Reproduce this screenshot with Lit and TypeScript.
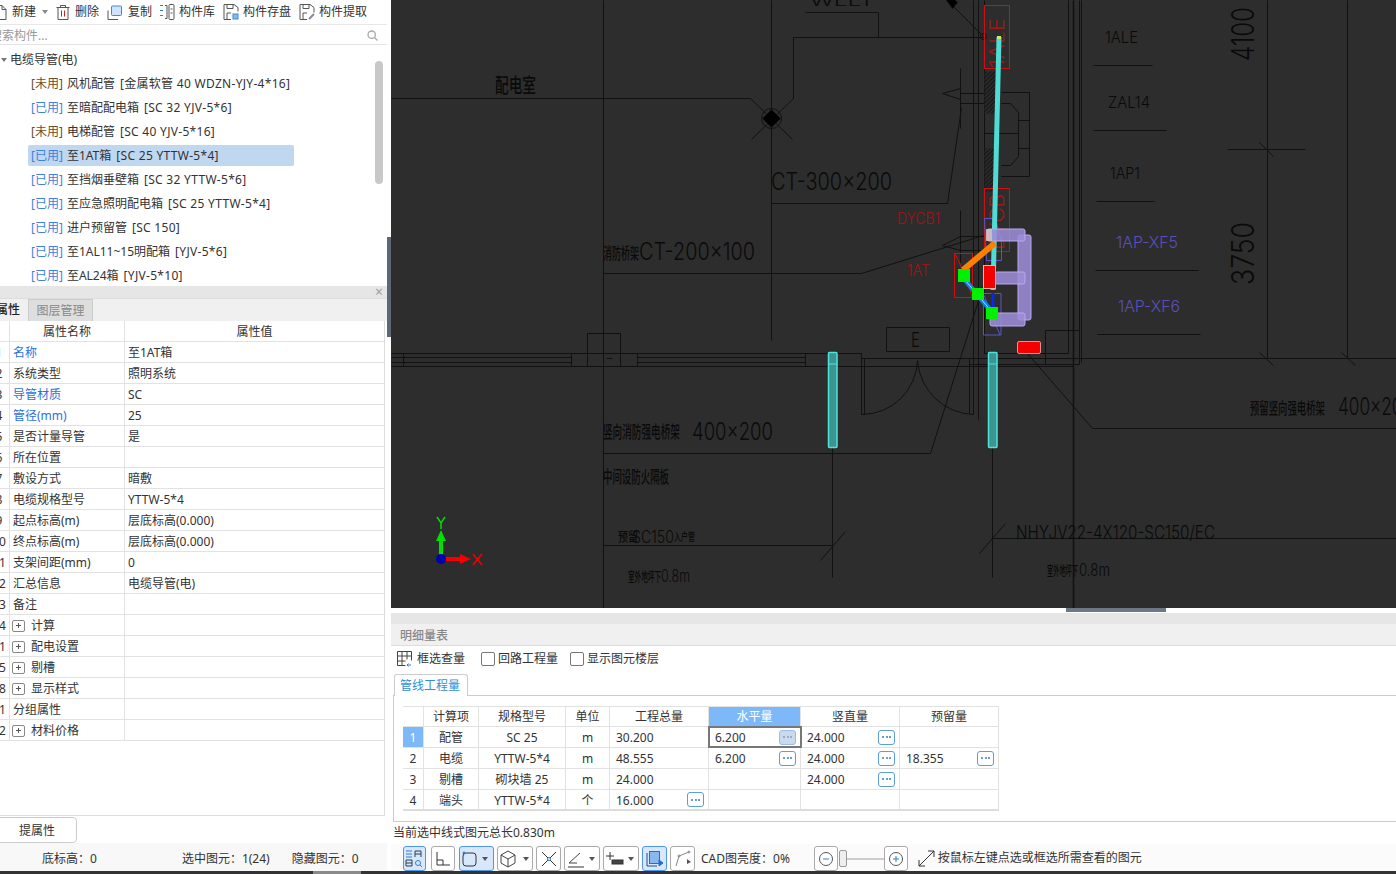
import { LitElement, html, css, svg } from 'lit';
import { customElement } from 'lit/decorators.js';

const UI_FONT = css`"Noto Sans", "Noto Sans CJK SC", sans-serif`;

// cad line work, page coordinates: x1 y1 x2 y2
const LINES: number[][] = [
  [391, 98, 750, 98], [750, 98, 792, 139], [793, 98, 751, 139], [793, 98, 793, 37],
  [793, 37, 983, 37], [878, 37, 878, 12], [805, 12, 878, 12],
  [603, 0, 603, 608], [771, 0, 771, 340], [771, 203, 947, 203], [947, 203, 961, 107],
  [960, 68, 960, 128], [960, 88, 942, 93], [942, 93, 960, 99], [960, 93, 984, 93], [960, 103, 984, 103],
  [960, 236, 942, 245], [942, 245, 960, 250], [960, 236, 984, 236], [960, 250, 984, 250], [960, 210, 960, 262],
  [603, 273, 861, 273], [861, 273, 983, 235],
  [391, 353, 861, 353], [391, 357, 571, 357], [391, 362, 571, 362], [391, 366, 861, 366],
  [637, 357, 805, 357], [637, 362, 805, 362],
  [403, 353, 403, 366], [571, 353, 571, 366], [637, 353, 637, 366], [805, 353, 805, 366],
  [587, 333, 620, 333], [587, 333, 587, 366], [620, 333, 620, 366], [606, 358, 612, 358],
  [861, 353, 861, 414], [864, 358, 864, 414], [861, 414, 864, 414],
  [603, 453, 930, 453], [930, 453, 990, 262],
  [973, 0, 973, 414], [969, 358, 969, 414], [978, 0, 978, 419], [984, 0, 984, 353],
  [984, 353, 1068, 353], [1068, 0, 1068, 353], [1079, 0, 1079, 364], [1081, 0, 1081, 362],
  [1045, 330, 1079, 330], [1045, 330, 1045, 364], [969, 364, 1079, 364],
  [861, 358, 1396, 358], [861, 366, 1073, 366],
  [1097, 334, 1200, 334], [1267, 0, 1267, 358], [1347, 0, 1347, 358],
  [1259, 352, 1273, 365], [1341, 352, 1355, 365], [1227, 149, 1305, 149], [1259, 142, 1273, 156],
  [1027, 353, 1092, 428], [1092, 428, 1396, 428],
  [992, 448, 992, 577], [979, 553, 1005, 523], [992, 538, 1396, 538],
  [832, 448, 832, 577], [603, 545, 832, 545], [820, 560, 845, 531],
  [1093, 65, 1152, 65], [1093, 130, 1166, 130], [1096, 201, 1154, 201], [1095, 270, 1198, 270],
  [1001, 92, 1029, 92], [1029, 92, 1029, 176], [1029, 176, 1001, 176],
  [1001, 103, 1010, 103], [1010, 103, 1018, 112], [1018, 112, 1018, 156], [1018, 156, 1010, 165], [1010, 165, 1001, 165],
  [1018, 120, 1029, 120], [1018, 148, 1029, 148], [984, 133, 1018, 133],
  [886, 327, 949, 327], [949, 327, 949, 351], [949, 351, 886, 351], [886, 351, 886, 327],
];

// x, baseline, width, size, text, colour
const LABELS: [number, number, number, number, string, string][] = [
  [495, 93, 41, 20, '配电室', '#0a0a0a'],
  [810, 6, 60, 14, 'WLL1', '#0a0a0a'],
  [771, 190, 121, 24, 'CT-300×200', '#0a0a0a'],
  [603, 259, 36, 16, '消防桥架', '#0a0a0a'],
  [639, 260, 116, 24, 'CT-200×100', '#0a0a0a'],
  [603, 438, 77, 17, '竖向消防强电桥架', '#0a0a0a'],
  [692, 440, 81, 24, '400×200', '#0a0a0a'],
  [603, 483, 66, 17, '中间设防火隔板', '#0a0a0a'],
  [618, 541, 20, 13, '预留', '#0a0a0a'],
  [632, 543, 42, 17, 'SC150', '#0a0a0a'],
  [674, 541, 21, 11, '入户管', '#0a0a0a'],
  [628, 581, 33, 13, '室外地坪下', '#0a0a0a'],
  [661, 582, 29, 17, '0.8m', '#0a0a0a'],
  [1047, 575, 31, 13, '室外地坪下', '#0a0a0a'],
  [1079, 576, 31, 17, '0.8m', '#0a0a0a'],
  [1016, 539, 199, 19, 'NHYJV22-4X120-SC150/EC', '#0a0a0a'],
  [1250, 414, 75, 16, '预留竖向强电桥架', '#0a0a0a'],
  [1338, 415, 75, 24, '400×200', '#0a0a0a'],
  [1105, 43, 33, 16, '1ALE', '#0a0a0a'],
  [1108, 108, 42, 16, 'ZAL14', '#0a0a0a'],
  [1110, 179, 30, 16, '1AP1', '#0a0a0a'],
  [1116, 248, 62, 16, '1AP-XF5', '#5a50b8'],
  [1118, 312, 62, 16, '1AP-XF6', '#5a50b8'],
  [897, 224, 43, 16, 'DYCB1', '#a01414'],
  [907, 276, 23, 16, '1AT', '#a01414'],
  [911, 347, 9, 20, 'E', '#0a0a0a'],
];

const PURPLE = [
  [1018, 235, 13, 85], [987, 229, 38, 12], [995, 272, 30, 12], [990, 313, 35, 13],
];

const hasCjk = (s: string) => /[\u4e00-\u9fff]/.test(s);

@customElement('cad-canvas')
export class CadCanvas extends LitElement {
  static styles = css`
    :host { display: block; height: 608px; background: #2d2d2d; overflow: hidden; }
    svg { display: block; }
    text { font-family: Inter, "Liberation Sans", sans-serif; font-weight: 300; }
    text.cn { font-family: "Noto Sans CJK SC", sans-serif; font-weight: 500; }
  `;

  render() {
    return html`<svg width="1005" height="608" viewBox="391 0 1005 608">
      <defs>
        <pattern id="hatch" width="3" height="3" patternUnits="userSpaceOnUse" patternTransform="rotate(45)">
          <rect width="3" height="3" fill="#2a2a2a"></rect>
          <line x1="0" y1="0" x2="0" y2="3" stroke="#0c0c0c" stroke-width="1.500"></line>
        </pattern>
      </defs>
      <g stroke="#111" stroke-width="1" fill="none" transform="translate(.5 .5)">
        ${LINES.map(l => svg`<line x1=${l[0]} y1=${l[1]} x2=${l[2]} y2=${l[3]}></line>`)}
        <line x1="1073" y1="0" x2="1073" y2="608" stroke-width="1.500"></line>
        <circle cx="771" cy="118" r="10"></circle>
        <path d="M771 109l9 9-9 9-9-9z" fill="#000"></path>
        <path d="M861 414A56 56 0 0 0 917 360M917 360A58 58 0 0 0 973 414"></path>
        <circle cx="983" cy="36" r="3"></circle>
        <path d="M983 36L950 3"></path>
        <path d="M944 -3l6-2 7 7-5 6z" fill="#000"></path>
        <rect x="984" y="71" width="11" height="42" fill="url(#hatch)" stroke="none"></rect>
        <rect x="984" y="148" width="10" height="43" fill="url(#hatch)" stroke="none"></rect>
      </g>
      ${LABELS.map(l => svg`<text class=${hasCjk(l[4]) ? 'cn' : ''} x=${l[0]} y=${l[1]} font-size=${l[3]} fill=${l[5]} textLength=${l[2]} lengthAdjust="spacingAndGlyphs">${l[4]}</text>`)}
      <text transform="translate(1254 61) rotate(-90)" font-size="31" fill="#0a0a0a" textLength="54" lengthAdjust="spacingAndGlyphs">4100</text>
      <text transform="translate(1254 285) rotate(-90)" font-size="31" fill="#0a0a0a" textLength="63" lengthAdjust="spacingAndGlyphs">3750</text>

      <g fill="none" stroke="#d01010" stroke-width="1" transform="translate(.5 .5)">
        <rect x="984" y="5" width="25" height="63"></rect>
        <rect x="984" y="188" width="25" height="63"></rect>
        <rect x="954" y="253" width="18" height="44"></rect>
        <path d="M955 254l10 22M965 276l7 22"></path>
      </g>
      <text transform="translate(1004 68) rotate(-90)" font-size="20" fill="#a01818" textLength="50" lengthAdjust="spacingAndGlyphs">1ALE</text>
      <text transform="translate(1004 250) rotate(-90)" font-size="20" fill="#a01818" textLength="56" lengthAdjust="spacingAndGlyphs">DYCB</text>

      <g fill="none" stroke="#5a54c8" stroke-width="1">
        <path d="M984.500 218.500h11l6 24v18h-15z"></path>
        <path d="M983.500 293.500h17.500v41.500h-17.500z"></path>
        <path d="M983 293l17 42"></path>
      </g>
      <line x1="999" y1="37" x2="993" y2="290" stroke="#4edcd4" stroke-width="5"></line>
      <rect x="997" y="36" width="4" height="3" fill="#c8e868"></rect>
      <line x1="993" y1="293" x2="993" y2="307" stroke="#0a28e8" stroke-width="3"></line>
      ${PURPLE.map(p => svg`<rect x=${p[0]} y=${p[1]} width=${p[2]} height=${p[3]} rx="2" fill="#9d8dd6" fill-opacity=".88" stroke="#b8a8f4"></rect>`)}
      <rect x="986" y="229" width="6" height="12" fill="#d8c8c0" fill-opacity=".8"></rect>
      <line x1="963" y1="270" x2="995" y2="243" stroke="#ff7f00" stroke-width="6"></line>
      <line x1="965" y1="280" x2="992" y2="312" stroke="#0a80f0" stroke-width="5"></line>
      <line x1="965" y1="280" x2="992" y2="312" stroke="#a8dcff" stroke-width="1"></line>
      <rect x="958" y="269" width="12" height="13" fill="#00f000"></rect>
      <rect x="972" y="288" width="12" height="12" fill="#00f000"></rect>
      <rect x="986" y="307" width="12" height="12" fill="#00f000"></rect>
      <rect x="983.500" y="265.500" width="12" height="23" fill="#f40000" stroke="#e8b0a8"></rect>
      <rect x="1017.500" y="341.500" width="23" height="12" rx="1.500" fill="#f40000" stroke="#e89088"></rect>

      <g fill="#3fa8a4" fill-opacity=".85" stroke="#4ee4dc" stroke-width="1.500">
        <rect x="828.500" y="352.500" width="8.500" height="95" rx="1"></rect>
        <rect x="988.500" y="352.500" width="8.500" height="95" rx="1"></rect>
      </g>
      <path d="M828 364h9M988 364h9" stroke="#4ee4dc"></path>

      <line x1="441" y1="559" x2="441" y2="540" stroke="#00e000" stroke-width="4"></line>
      <path d="M441 530l5 11h-10z" fill="#00e000"></path>
      <path d="M437 517l4 6 4-6M441 523v6" stroke="#00e000" fill="none" stroke-width="1.500"></path>
      <line x1="441" y1="559" x2="460" y2="559" stroke="#f40000" stroke-width="4"></line>
      <path d="M471 559l-11 5v-10z" fill="#f40000"></path>
      <path d="M473 554l9 11M482 554l-9 11" stroke="#f40000" fill="none" stroke-width="1.500"></path>
      <circle cx="441" cy="559" r="5" fill="#0000b0"></circle>
    </svg>`;
  }
}

type TreeRow = { used: boolean; name: string; spec: string; selected?: boolean };

const TREE: TreeRow[] = [
  { used: false, name: '风机配管', spec: '[金属软管 40 WDZN-YJY-4*16]' },
  { used: true, name: '至暗配配电箱', spec: '[SC 32 YJV-5*6]' },
  { used: false, name: '电梯配管', spec: '[SC 40 YJV-5*16]' },
  { used: true, name: '至1AT箱', spec: '[SC 25 YTTW-5*4]', selected: true },
  { used: true, name: '至挡烟垂壁箱', spec: '[SC 32 YTTW-5*6]' },
  { used: true, name: '至应急照明配电箱', spec: '[SC 25 YTTW-5*4]' },
  { used: true, name: '进户预留管', spec: '[SC 150]' },
  { used: true, name: '至1AL11~15明配箱', spec: '[YJV-5*6]' },
  { used: true, name: '至AL24箱', spec: '[YJV-5*10]' },
];

type PropRow = { i: string; name: string; value?: string; link?: boolean; plus?: boolean };

const PROPS: PropRow[] = [
  { i: '1', name: '名称', value: '至1AT箱', link: true },
  { i: '2', name: '系统类型', value: '照明系统' },
  { i: '3', name: '导管材质', value: 'SC', link: true },
  { i: '4', name: '管径(mm)', value: '25', link: true },
  { i: '5', name: '是否计量导管', value: '是' },
  { i: '6', name: '所在位置' },
  { i: '7', name: '敷设方式', value: '暗敷' },
  { i: '8', name: '电缆规格型号', value: 'YTTW-5*4' },
  { i: '9', name: '起点标高(m)', value: '层底标高(0.000)' },
  { i: '10', name: '终点标高(m)', value: '层底标高(0.000)' },
  { i: '11', name: '支架间距(mm)', value: '0' },
  { i: '12', name: '汇总信息', value: '电缆导管(电)' },
  { i: '13', name: '备注' },
  { i: '14', name: '计算', plus: true },
  { i: '21', name: '配电设置', plus: true },
  { i: '25', name: '剔槽', plus: true },
  { i: '28', name: '显示样式', plus: true },
  { i: '31', name: '分组属性' },
  { i: '32', name: '材料价格', plus: true },
];

type Qty = { v: string; more?: boolean };
type QtyRow = { n: string; item: string; spec: string; unit: string; total: Qty; h: Qty; v: Qty; r: Qty };

const QTY: QtyRow[] = [
  { n: '1', item: '配管', spec: 'SC 25', unit: 'm', total: { v: '30.200' }, h: { v: '6.200', more: true }, v: { v: '24.000', more: true }, r: { v: '' } },
  { n: '2', item: '电缆', spec: 'YTTW-5*4', unit: 'm', total: { v: '48.555' }, h: { v: '6.200', more: true }, v: { v: '24.000', more: true }, r: { v: '18.355', more: true } },
  { n: '3', item: '剔槽', spec: '砌块墙 25', unit: 'm', total: { v: '24.000' }, h: { v: '' }, v: { v: '24.000', more: true }, r: { v: '' } },
  { n: '4', item: '端头', spec: 'YTTW-5*4', unit: '个', total: { v: '16.000', more: true }, h: { v: '' }, v: { v: '' }, r: { v: '' } },
];

@customElement('app-root')
export class AppRoot extends LitElement {
  static styles = css`
    :host {
      display: block; width: 1396px; height: 874px; overflow: hidden; position: relative;
      background: #fff; color: #333; font: 12px/16px ${UI_FONT};
    }
    .main { display: flex; height: 871px; }
    .edge { height: 3px; background: #333; position: relative; }
    .edge i { position: absolute; left: 313px; width: 48px; top: 0; bottom: 0; background: #8a8a8a; }

    .left { width: 387px; flex: none; display: flex; flex-direction: column; overflow: hidden; }
    .split { width: 4px; flex: none; background: #fff; position: relative; }
    .split i { position: absolute; left: 0; right: 0; top: 237px; height: 100px; background: #5c6876; }
    .right { flex: 1; min-width: 0; display: flex; flex-direction: column; overflow: hidden; }

    .tools { height: 25px; flex: none; box-sizing: border-box; display: flex; align-items: center; padding: 0; border-bottom: 1px solid #e8e8e8; white-space: nowrap; }
    .tools span { display: inline-flex; align-items: center; }
    .tools svg { display: block; flex: none; }
    .caret { width: 0; height: 0; border: 3px solid transparent; border-top: 4px solid #888; border-bottom: 0; }

    .search { height: 20px; flex: none; box-sizing: border-box; display: flex; align-items: center; justify-content: space-between; padding: 2px 9px 0 0; border-bottom: 1px solid #e4e4e4; color: #999; }
    .search b { font-weight: 400; margin-left: -10px; }

    .tree { height: 237px; flex: none; position: relative; overflow: hidden; }
    .root { height: 24px; margin-top: 2px; display: flex; align-items: center; gap: 3px; padding: 2px 0 0 1px; box-sizing: border-box; }
    .root i { width: 0; height: 0; border: 3.500px solid transparent; border-top: 4px solid #777; border-bottom: 0; }
    .node { height: 24px; display: flex; align-items: center; padding-left: 28px; }
    .node div { height: 21px; box-sizing: border-box; display: flex; align-items: center; padding: 2px 4px 0 3px; white-space: nowrap; gap: 4px; border-radius: 2px; }
    .node.on div { background: #c0d7f0; width: 266px; }
    .node .spec { letter-spacing: .3px; margin-left: 1px; }
    .u0 { color: #6a4d2e; }
    .u1 { color: #3f7fe0; }
    .thumb { position: absolute; left: 375px; top: 16px; width: 8px; height: 123px; border-radius: 4px; background: #c8c8c8; }

    .gap { height: 4px; flex: none; }
    .strip { height: 12px; flex: none; background: #e6e6e6; display: flex; justify-content: flex-end; align-items: center; padding-right: 4px; color: #a0a0a0; font-size: 14px; }
    .tabs { height: 23px; flex: none; box-sizing: border-box; background: #f0f0f0; display: flex; border-top: 1px solid #ddd; }
    .tabs span { display: flex; align-items: center; justify-content: center; }
    .tabs .cur { width: 28px; box-sizing: border-box; justify-content: flex-end; padding-right: 8px; color: #222; white-space: nowrap; font-weight: 500; }
    .tabs .oth { width: 65px; background: #dedede; color: #888; border: 1px solid #ccc; border-bottom: 0; box-sizing: border-box; }

    .props { height: 495px; flex: none; box-sizing: border-box; width: 385px; border-right: 1px solid #dcdcdc; border-bottom: 1px solid #dcdcdc; }
    .pr { display: grid; grid-template-columns: 10px 115px 259px; height: 21px; box-sizing: border-box; border-bottom: 1px solid #e2e2e2; }
    .pr > div { display: flex; align-items: center; box-sizing: border-box; border-right: 1px solid #e2e2e2; padding: 2px 0 0 3px; overflow: hidden; white-space: nowrap; }
    .pr .ix { padding: 2px 0 0 0; }
    .pr .ix span { flex: none; width: 38px; margin-left: -20px; text-align: center; }
    .pr.head > div { justify-content: center; padding: 2px 0 0 0; }
    .pr > div:last-child { border-right: 0; }
    .pr .link { color: #2b6fe0; }
    .plus { width: 13px; height: 12px; margin: 0 6px 0 -1px; flex: none; box-sizing: border-box; border: 1px solid #888; border-radius: 2px; position: relative; }
    .plus::before, .plus::after { content: ""; position: absolute; background: #555; }
    .plus::before { left: 3px; right: 3px; top: 4px; height: 1px; }
    .plus::after { top: 2px; bottom: 3px; left: 5px; width: 1px; }

    .pick { height: 27px; flex: none; padding-top: 1px; box-sizing: border-box; }
    .pick button { font: inherit; color: inherit; width: 78px; height: 26px; margin-left: -1px; padding: 1px 2px 0 0; background: #fff; border: 1px solid #ccc; border-radius: 0 4px 4px 0; }
    .status { height: 28px; flex: none; box-sizing: border-box; padding-top: 3px; background: #f8f8f8; display: flex; align-items: center; white-space: nowrap; }
    .status span:nth-child(1) { margin-left: 42px; }
    .status span:nth-child(2) { margin-left: 85px; }
    .status span:nth-child(3) { margin-left: 22px; }

    .grip { height: 5px; flex: none; background: #fff; }
    .grip i { display: block; width: 100px; height: 4px; margin-left: 675px; background: #6c7886; }
    .band { height: 11px; flex: none; background: #e6e6e6; }
    .head2 { height: 22px; flex: none; box-sizing: border-box; padding: 2px 0 0 9px; background: #f0f0f0; border-bottom: 1px solid #ddd; display: flex; align-items: center; color: #888; font-weight: 500; }
    .opts { height: 24px; flex: none; box-sizing: border-box; display: flex; align-items: center; padding: 1px 0 0 6px; white-space: nowrap; }
    .opts svg { margin-right: 5px; }
    .check { width: 14px; height: 14px; box-sizing: border-box; border: 1px solid #777; border-radius: 2px; margin: 0 3px 0 1px; background: #fff; }
    .qtab { height: 26px; flex: none; padding-left: 3px; display: flex; align-items: flex-end; }
    .qtab span { width: 74px; height: 22px; box-sizing: border-box; display: flex; align-items: center; justify-content: center; color: #2f8fd8; background: #fff; border: 1px solid #ccc; border-bottom: 0; border-radius: 3px 3px 0 0; z-index: 1; padding-right: 2px; }
    .panel { height: 127px; flex: none; box-sizing: border-box; margin: -1px 0 0 2px; border-top: 1px solid #ccc; border-left: 1px solid #ccc; border-bottom: 1px solid #ccc; padding: 10px 0 0 9px; }
    .qr { display: grid; grid-template-columns: 21px 55px 87px 44px 99px 92px 99px 99px; height: 21px; box-sizing: border-box; border-bottom: 1px solid #e2e2e2; width: 596px; }
    .qr:last-child { border-bottom: 2px solid #dcdcdc; }
    .qr > div { display: flex; align-items: center; justify-content: center; box-sizing: border-box; padding-top: 2px; border-right: 1px solid #e2e2e2; position: relative; white-space: nowrap; }
    .qr.top { border-top: 1px solid #e2e2e2; }
    .qr.top > div { padding-top: 0; }
    .qr .num { justify-content: space-between; padding: 0 4px 0 6px; }
    .qr .num span:first-child { position: relative; top: 1px; }
    .qr .hot { background: #7db8f8; color: #fff; }
    .qr .sel { outline: 2px solid #777; outline-offset: -1px; z-index: 1; }
    .more { width: 17px; height: 15px; box-sizing: border-box; border: 1px solid #5b9fd8; border-radius: 3px; background: #fff; display: flex; align-items: center; justify-content: center; gap: 1.500px; }
    .more i { width: 2px; height: 2px; background: #2f7fd0; border-radius: 50%; }
    .sel .more { background: #c8daf0; border-color: #9dbce0; }
    .sel .more i { background: #99a; }

    .note { height: 22px; flex: none; display: flex; align-items: center; padding-left: 2px; }
    .bar { height: 27px; flex: none; display: flex; align-items: flex-start; padding: 2px 0 0 12px; gap: 3px; white-space: nowrap; box-sizing: border-box; background: #fbfbfb; }
    .btn { height: 25px; box-sizing: border-box; border: 1px solid #aaa; border-radius: 3px; background: #fff; display: flex; align-items: center; padding-left: 1px; gap: 3px; flex: none; }
    .btn.n { width: 25px; justify-content: center; padding: 0; }
    .btn.w { width: 36px; }
    .btn.a { background: #d8e8fa; border-color: #4f96ea; }
    .btn .caret { border-top-color: #555; }
    .bar .txt { align-self: center; margin-top: -1px; }
    .bar .sl { display: flex; align-items: center; height: 25px; }
    .track { width: 37px; height: 2px; background: #ccc; }
    .knob { width: 8px; height: 17px; box-sizing: border-box; border: 1px solid #999; border-radius: 2px; background: #eee; margin-left: 1px; }
  `;

  private more() {
    return html`<span class="more"><i></i><i></i><i></i></span>`;
  }

  private cell(q: Qty, extra = '') {
    return html`<div class="num ${extra}"><span>${q.v}</span>${q.more ? this.more() : ''}</div>`;
  }

  render() {
    return html`
      <div class="main">
        <div class="left">
          <div class="tools">
            <svg style="margin-left:-6px" width="13" height="15" viewBox="0 0 13 15" fill="none" stroke="#555"><path d="M1 .5h7l4 4v10H1z"/><path d="M8 .5v4h4"/></svg>
            <span style="margin-left:5px">新建</span>
            <i class="caret" style="margin-left:6px"></i>
            <svg style="margin-left:8px" width="14" height="15" viewBox="0 0 14 15" fill="none" stroke="#555"><path d="M.5 2.500h13M4.500 2.500V.5h5v2M2 2.500v12h10v-12"/><path d="M5.500 5.500v6M8.500 5.500v6" stroke="#d02020"/></svg>
            <span style="margin-left:5px">删除</span>
            <svg style="margin-left:8px" width="16" height="15" viewBox="0 0 16 15" fill="none"><path d="M1 5.500v9h10" stroke="#555"/><rect x="4.500" y="1" width="10" height="9.500" rx="1" fill="#cfe4fa" stroke="#3a8ae0"/></svg>
            <span style="margin-left:5px">复制</span>
            <svg style="margin-left:7px" width="16" height="16" viewBox="0 0 16 16" fill="none" stroke="#555"><path d="M1 1.500h3M1 6.500h3M1 11.500h3" stroke="#2f7fd0"/><rect x="10" y=".5" width="5" height="15" rx="1"/><path d="M6 1.500h2v13H6M11.500 5h2M11.500 9h2"/></svg>
            <span style="margin-left:4px">构件库</span>
            <svg style="margin-left:8px" width="16" height="16" viewBox="0 0 16 16" fill="none" stroke="#555"><path d="M1 .5h10l4 3v4M1 .5v15h7"/><path d="M4 .5v4h6v-4M4 15V9h4"/><rect x="10" y="10" width="5" height="5" fill="#8ab8e8" stroke="#3a8ae0"/></svg>
            <span style="margin-left:4px">构件存盘</span>
            <svg style="margin-left:8px" width="16" height="16" viewBox="0 0 16 16" fill="none" stroke="#555"><path d="M1 .5h10l4 3v5M1 .5v15h7"/><path d="M4 .5v4h6v-4M4 15V9h4"/><path d="M10 15l5-5" stroke="#889" stroke-width="2"/></svg>
            <span style="margin-left:4px">构件提取</span>
          </div>
          <div class="search"><b>搜索构件...</b>
            <svg width="11" height="11" viewBox="0 0 11 11" fill="none" stroke="#aaa" stroke-width="1.300"><circle cx="4.700" cy="4.700" r="3.700"/><path d="M7.500 7.500l3 3"/></svg>
          </div>
          <div class="tree">
            <div class="root"><i></i><span>电缆导管(电)</span></div>
            ${TREE.map(r => html`<div class="node ${r.selected ? 'on' : ''}"><div>
              <span class=${r.used ? 'u1' : 'u0'}>${r.used ? '[已用]' : '[未用]'}</span><span>${r.name}</span><span class="spec">${r.spec}</span>
            </div></div>`)}
            <div class="thumb"></div>
          </div>
          <div class="gap"></div>
          <div class="strip">×</div>
          <div class="tabs"><span class="cur">属性</span><span class="oth">图层管理</span></div>
          <div class="props">
            <div class="pr head"><div></div><div>属性名称</div><div>属性值</div></div>
            ${PROPS.map(p => html`<div class="pr">
              <div class="ix"><span>${p.i}</span></div>
              <div class=${p.link ? 'link' : ''}>${p.plus ? html`<i class="plus"></i>` : ''}${p.name}</div>
              <div>${p.value ?? ''}</div>
            </div>`)}
          </div>
          <div class="pick"><button>提属性</button></div>
          <div class="status"><span>底标高：0</span><span>选中图元：1(24)</span><span>隐藏图元：0</span></div>
        </div>
        <div class="split"><i></i></div>
        <div class="right">
          <cad-canvas></cad-canvas>
          <div class="grip"><i></i></div>
          <div class="band"></div>
          <div class="head2">明细量表</div>
          <div class="opts">
            <svg width="15" height="16" viewBox="0 0 15 16" fill="none" stroke="#444"><path d="M.5.5h14v9M.5.5v14h8M5 .5v14M10 .5v8M.5 5h14M.5 10h8"/><path d="M14 14h-4l1.500-1.500M10 14l1.500 1.500" stroke="#2f7fd0"/></svg>
            <span style="margin-right:15px">框选查量</span>
            <i class="check"></i><span style="margin-right:11px">回路工程量</span>
            <i class="check"></i><span>显示图元楼层</span>
          </div>
          <div class="qtab"><span>管线工程量</span></div>
          <div class="panel">
            <div class="qr top">
              <div></div><div>计算项</div><div>规格型号</div><div>单位</div><div>工程总量</div>
              <div class="hot">水平量</div><div>竖直量</div><div>预留量</div>
            </div>
            ${QTY.map((r, i) => html`<div class="qr">
              <div class=${i === 0 ? 'hot' : ''}>${r.n}</div>
              <div>${r.item}</div><div>${r.spec}</div><div>${r.unit}</div>
              ${this.cell(r.total)}${this.cell(r.h, i === 0 ? 'sel' : '')}${this.cell(r.v)}${this.cell(r.r)}
            </div>`)}
          </div>
          <div class="note">当前选中线式图元总长0.830m</div>
          <div class="bar">
            <div class="btn n a" style="width:23px;margin-right:2px"><svg width="19" height="19" viewBox="0 0 19 19" fill="none" stroke="#2b3f55"><path d="M1 2h6M1 5h6M1 8h6" stroke="#2f7fd0"/><path d="M10 8V2h6v6M10 5h6M1 17V11h6v6zM1 14h6"/><circle cx="13" cy="14" r="2.500" stroke="#2f7fd0"/><path d="M15 16l2 2" stroke="#2f7fd0"/></svg></div>
            <div class="btn n" style="width:24px;margin-right:1px"><svg width="16" height="16" viewBox="0 0 16 16" fill="none" stroke="#333"><path d="M2 1v13h13M2 9h6v5"/></svg></div>
            <div class="btn w a" style="width:35px"><svg width="18" height="18" viewBox="0 0 18 18" fill="none" stroke="#333"><rect x="2" y="3" width="13" height="13" rx="3"/><circle cx="3" cy="3" r="1.500" fill="#2f7fd0" stroke="none"/></svg><i class="caret"></i></div>
            <div class="btn w"><svg width="18" height="18" viewBox="0 0 18 18" fill="none" stroke="#444"><path d="M9 1l7 4v8l-7 4-7-4V5zM2 5l7 4 7-4M9 9v8"/></svg><i class="caret" style="margin-left:3px"></i></div>
            <div class="btn n"><svg width="18" height="18" viewBox="0 0 18 18" fill="none" stroke="#333"><path d="M2 2l14 14M16 2L2 16"/><circle cx="9" cy="9" r="1.500" fill="#fff" stroke="#2f7fd0"/></svg></div>
            <div class="btn w"><svg width="20" height="18" viewBox="0 0 20 18" fill="none" stroke="#444"><path d="M3 13L14 3M3 13h8"/><path d="M2 17h16" stroke="#999" stroke-width="2"/></svg><i class="caret"></i></div>
            <div class="btn w"><svg width="20" height="18" viewBox="0 0 20 18" fill="none" stroke="#333"><path d="M5 2v8M1 6h8"/><rect x="7" y="10" width="11" height="4" fill="#444"/></svg><i class="caret"></i></div>
            <div class="btn n a"><svg width="18" height="18" viewBox="0 0 18 18" fill="none" stroke="#1f6fd0"><rect x="3.500" y="1.500" width="10" height="12" fill="#8ab8ee"/><path d="M1 3v13h10" stroke="#1f4f90"/><path d="M13 10l4 3-4 3z" fill="#1f6fd0"/></svg></div>
            <div class="btn n"><svg width="18" height="18" viewBox="0 0 18 18" fill="none" stroke="#888"><path d="M2 16L5 6l10-4"/><circle cx="5" cy="6" r="1"/><circle cx="15" cy="2" r="1"/><path d="M13 9l4 3-4 2z" fill="#555" stroke="none"/></svg></div>
            <span class="txt" style="margin:0 21px 0 3px">CAD图亮度：0%</span>
            <div class="sl">
              <div class="btn n" style="width:24px"><svg width="16" height="16" viewBox="0 0 16 16" fill="none" stroke="#555"><circle cx="8" cy="8" r="6.500"/><path d="M5 8h6" stroke="#2f7fd0"/></svg></div>
              <i class="knob"></i><i class="track"></i>
              <div class="btn n" style="width:24px"><svg width="16" height="16" viewBox="0 0 16 16" fill="none" stroke="#555"><circle cx="8" cy="8" r="6.500"/><path d="M5 8h6M8 5v6" stroke="#2f7fd0"/></svg></div>
            </div>
            <svg style="margin:4px 0 0 7px;flex:none" width="17" height="17" viewBox="0 0 17 17" fill="none" stroke="#333"><path d="M1 16L16 1M1 10v6h6M10 1h6v6"/></svg>
            <span class="txt">按鼠标左键点选或框选所需查看的图元</span>
          </div>
        </div>
      </div>
      <div class="edge"><i></i></div>
    `;
  }
}
